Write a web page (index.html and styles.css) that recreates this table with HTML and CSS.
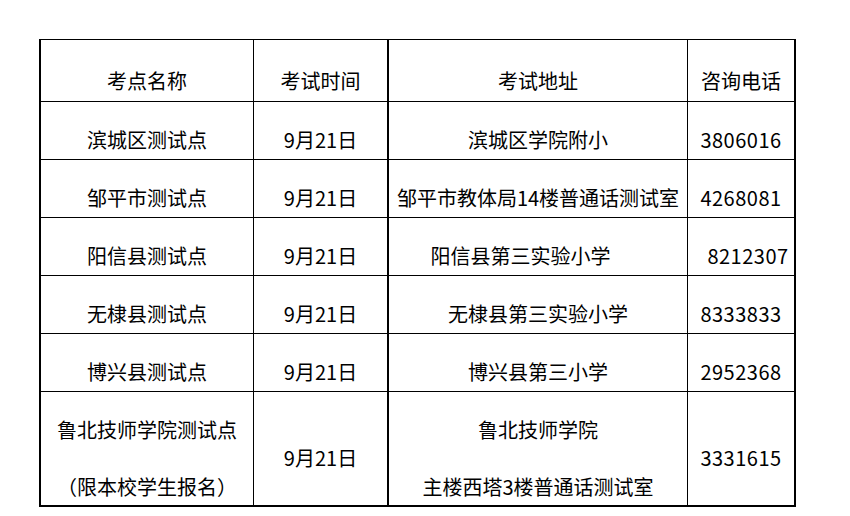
FILE: index.html
```html
<!DOCTYPE html>
<html lang="zh-CN">
<head>
<meta charset="utf-8">
<title>考点信息</title>
<link rel="stylesheet" href="styles.css">
</head>
<body>
<div class="sheet">
  <div class="cell head">考点名称</div>
  <div class="cell head thick">考试时间</div>
  <div class="cell head">考试地址</div>
  <div class="cell head thick">咨询电话</div>

  <div class="cell">滨城区测试点</div>
  <div class="cell thick">9月21日</div>
  <div class="cell">滨城区学院附小</div>
  <div class="cell thick"><span class="num">3806016</span></div>

  <div class="cell">邹平市测试点</div>
  <div class="cell thick">9月21日</div>
  <div class="cell">邹平市教体局14楼普通话测试室</div>
  <div class="cell thick"><span class="num">4268081</span></div>

  <div class="cell">阳信县测试点</div>
  <div class="cell thick">9月21日</div>
  <div class="cell shift-left">阳信县第三实验小学</div>
  <div class="cell thick shift-right"><span class="num">8212307</span></div>

  <div class="cell">无棣县测试点</div>
  <div class="cell thick">9月21日</div>
  <div class="cell">无棣县第三实验小学</div>
  <div class="cell thick"><span class="num">8333833</span></div>

  <div class="cell">博兴县测试点</div>
  <div class="cell thick">9月21日</div>
  <div class="cell">博兴县第三小学</div>
  <div class="cell thick"><span class="num">2952368</span></div>

  <div class="cell last multi"><div>鲁北技师学院测试点</div><div class="line2">（限本校学生报名）</div></div>
  <div class="cell last single thick">9月21日</div>
  <div class="cell last multi"><div>鲁北技师学院</div><div class="line2">主楼西塔3楼普通话测试室</div></div>
  <div class="cell last single thick"><span class="num">3331615</span></div>
</div>
</body>
</html>
```

FILE: styles.css
```css
* { box-sizing: border-box; }
html, body { margin: 0; padding: 0; background: #fff; }
body {
  font-family: "Noto Sans CJK SC", "Noto Sans", sans-serif;
  font-size: 20px;
  color: #000;
}
.sheet {
  margin: 39px 0 0 39px;
  width: 757px;
  display: grid;
  grid-template-columns: 215px 135px 299px 108px;
  grid-template-rows: 62px repeat(5, 58px) 115px;
  border-top: 1px solid #000;
}
.cell {
  display: flex;
  flex-direction: column;
  justify-content: flex-end;
  align-items: center;
  text-align: center;
  line-height: 26px;
  padding-bottom: 6px;
  border-right: 1px solid #000;
  border-bottom: 1px solid #000;
  white-space: nowrap;
}
.cell:nth-child(4n+1) { border-left: 2px solid #000; }
.cell.thick { border-right-width: 2px; }
.cell.head { padding-bottom: 7px; }
.cell.last { border-bottom-width: 2px; }
.cell.multi { padding-bottom: 5px; }
.cell.multi .line2 { margin-top: 31px; }
.cell.single { padding-bottom: 34px; }
.shift-left { padding-right: 35px; }
.shift-right { padding-left: 14px; }
.num { letter-spacing: 0.5px; }
```
